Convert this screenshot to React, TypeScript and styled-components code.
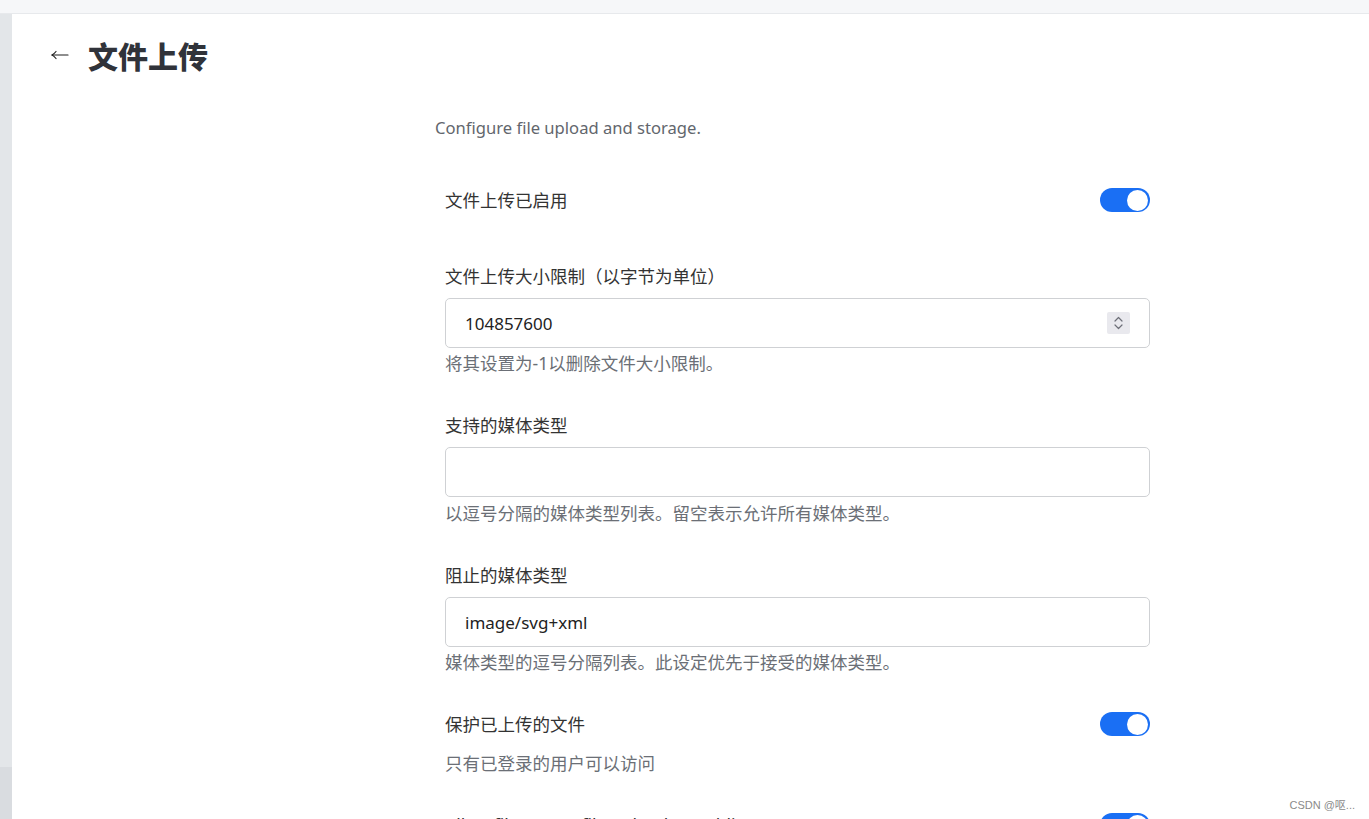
import React from "react";
import styled, { createGlobalStyle } from "styled-components";

const Global = createGlobalStyle`
  html, body { margin: 0; padding: 0; background: #ffffff; }
  body {
    font-family: "Noto Sans", "Noto Sans CJK SC", sans-serif;
    color: #333333;
    overflow: hidden;
  }
  * { box-sizing: border-box; }
`;

const Page = styled.div`
  width: 1369px;
  height: 819px;
  display: flex;
  flex-direction: column;
  position: relative;
  overflow: hidden;
`;

const TopBar = styled.div`
  height: 14px;
  flex: none;
  background: #f6f7f9;
  border-bottom: 1px solid #e7e9ec;
`;

const Body = styled.div`
  flex: 1;
  display: flex;
  min-height: 0;
`;

const SideStrip = styled.div`
  width: 12px;
  flex: none;
  display: flex;
  flex-direction: column;
`;

const StripPart = styled.div<{ $dark?: boolean }>`
  background: ${(p) => (p.$dark ? "#d9dce0" : "#e3e6e9")};
  ${(p) => (p.$dark ? "height: 52px; flex: none;" : "flex: 1;")}
`;

const Main = styled.main`
  flex: 1;
  display: flex;
  flex-direction: column;
  padding: 21px 0 0 38px;
`;

const Header = styled.div`
  display: flex;
  align-items: center;
  gap: 18px;
  height: 40px;
`;

const BackButton = styled.button`
  border: none;
  background: none;
  padding: 0;
  width: 20px;
  height: 20px;
  display: flex;
  align-items: center;
  justify-content: center;
  cursor: pointer;
  color: #222;
`;

const Title = styled.h1`
  margin: 0;
  font-family: "Noto Sans CJK SC", sans-serif;
  font-size: 30px;
  font-weight: 900;
  color: #30333a;
  line-height: 40px;
`;

const Column = styled.div`
  margin-left: 385px;
  width: 725px;
  display: flex;
  flex-direction: column;
  padding-top: 41px;
`;

const Description = styled.p`
  margin: 0 0 48px 0;
  font-size: 16.6px;
  line-height: 24px;
  color: #62666d;
`;

const Form = styled.div`
  margin-left: 10px;
  width: 705px;
  display: flex;
  flex-direction: column;
  gap: 38px;
`;

const Group = styled.div<{ $extra?: number }>`
  display: flex;
  flex-direction: column;
  margin-bottom: ${(p) => p.$extra ?? 0}px;
`;

const SwitchRow = styled.div<{ $textOffset?: number }>`
  display: flex;
  align-items: center;
  justify-content: space-between;
  height: 24px;
`;

const Label = styled.label`
  font-family: "Noto Sans", "Noto Sans CJK SC", sans-serif;
  font-size: 17.5px;
  line-height: 24px;
  color: #333;
`;

const FieldLabel = styled(Label)`
  margin-bottom: 10px;
`;

const Help = styled.div<{ $gap?: number }>`
  margin-top: ${(p) => p.$gap ?? 3}px;
  font-size: 17.5px;
  line-height: 24px;
  color: #6b6f76;
`;

const InputBox = styled.div`
  height: 50px;
  border: 1px solid #cfd1d4;
  border-radius: 5px;
  display: flex;
  align-items: center;
  padding: 0 19px;
  background: #fff;
`;

const InputText = styled.input`
  flex: 1;
  border: none;
  outline: none;
  background: transparent;
  font-family: "Noto Sans", sans-serif;
  font-size: 17px;
  color: #222;
  padding: 0;
`;

const Spinner = styled.div`
  width: 23px;
  height: 22px;
  background: #e9e9ee;
  border-radius: 2px;
  display: flex;
  align-items: center;
  justify-content: center;
`;

const Toggle = styled.div<{ $on?: boolean }>`
  width: 50px;
  height: 24px;
  border-radius: 12px;
  background: ${(p) => (p.$on ? "#1a6ff4" : "#ccc")};
  display: flex;
  align-items: center;
  justify-content: ${(p) => (p.$on ? "flex-end" : "flex-start")};
  padding: 0 2px;
  flex: none;
`;

const Knob = styled.div`
  width: 21px;
  height: 21px;
  border-radius: 50%;
  background: #fff;
`;

const Watermark = styled.div`
  position: absolute;
  right: 14px;
  bottom: 7px;
  font-family: "Liberation Sans", "Noto Sans CJK SC", sans-serif;
  font-size: 11px;
  color: #8a8a8a;
`;

const ArrowIcon = () => (
  <svg width="20" height="14" viewBox="0 0 20 14" fill="none" stroke="#1f1f1f" strokeWidth="1.2" strokeLinecap="round" strokeLinejoin="round">
    <path d="M2 7H18" />
    <path d="M6 3.5Q4 6 2 7Q4 8 6 10.5" />
  </svg>
);

const SpinIcon = () => (
  <svg width="11" height="16" viewBox="0 0 11 16" fill="none" stroke="#6d6f78" strokeWidth="1.2" strokeLinecap="round" strokeLinejoin="round">
    <path d="M2 6L5.5 2.5L9 6" />
    <path d="M2 10L5.5 13.5L9 10" />
  </svg>
);

const Switch = ({ on }: { on?: boolean }) => (
  <Toggle $on={on}>
    <Knob />
  </Toggle>
);

export default function App() {
  return (
    <Page>
      <Global />
      <TopBar />
      <Body>
        <SideStrip>
          <StripPart />
          <StripPart $dark />
        </SideStrip>
        <Main>
          <Header>
            <BackButton aria-label="back">
              <ArrowIcon />
            </BackButton>
            <Title>文件上传</Title>
          </Header>
          <Column>
            <Description>Configure file upload and storage.</Description>
            <Form>
              <Group $extra={14}>
                <SwitchRow>
                  <Label>文件上传已启用</Label>
                  <Switch on />
                </SwitchRow>
              </Group>
              <Group>
                <FieldLabel>文件上传大小限制（以字节为单位）</FieldLabel>
                <InputBox>
                  <InputText defaultValue="104857600" />
                  <Spinner>
                    <SpinIcon />
                  </Spinner>
                </InputBox>
                <Help>将其设置为-1以删除文件大小限制。</Help>
              </Group>
              <Group>
                <FieldLabel>支持的媒体类型</FieldLabel>
                <InputBox>
                  <InputText defaultValue="" />
                </InputBox>
                <Help $gap={4}>以逗号分隔的媒体类型列表。留空表示允许所有媒体类型。</Help>
              </Group>
              <Group>
                <FieldLabel>阻止的媒体类型</FieldLabel>
                <InputBox>
                  <InputText defaultValue="image/svg+xml" />
                </InputBox>
                <Help>媒体类型的逗号分隔列表。此设定优先于接受的媒体类型。</Help>
              </Group>
              <Group>
                <SwitchRow>
                  <Label>保护已上传的文件</Label>
                  <Switch on />
                </SwitchRow>
                <Help $gap={15}>只有已登录的用户可以访问</Help>
              </Group>
              <Group>
                <SwitchRow>
                  <Label>Allow filesystem file upload to public storage</Label>
                  <Switch on />
                </SwitchRow>
              </Group>
            </Form>
          </Column>
        </Main>
      </Body>
      <Watermark>CSDN @呕...</Watermark>
    </Page>
  );
}
